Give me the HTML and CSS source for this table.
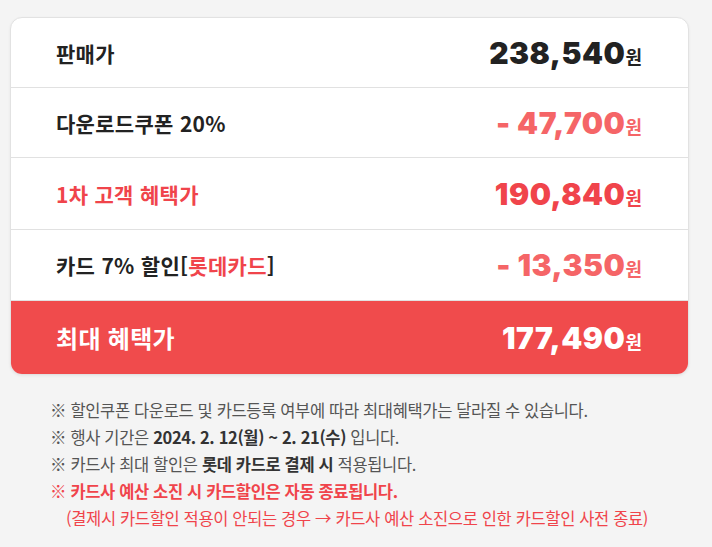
FILE: index.html
```html
<!DOCTYPE html>
<html lang="ko">
<head>
<meta charset="utf-8">
<title>최대 혜택가</title>
<link rel="stylesheet" href="styles.css">
</head>
<body>
<div class="page">
  <div class="card">
    <div class="row r1">
      <span class="label">판매가</span>
      <span class="price"><span class="num">238,540</span><span class="won">원</span></span>
    </div>
    <div class="row r2">
      <span class="label">다운로드쿠폰 20%</span>
      <span class="price minus"><span class="num">- 47,700</span><span class="won">원</span></span>
    </div>
    <div class="row r3">
      <span class="label red">1차 고객 혜택가</span>
      <span class="price strong-red"><span class="num">190,840</span><span class="won">원</span></span>
    </div>
    <div class="row r4">
      <span class="label">카드 7% 할인[<span class="red">롯데카드</span>]</span>
      <span class="price minus"><span class="num">- 13,350</span><span class="won">원</span></span>
    </div>
    <div class="row total">
      <span class="label">최대 혜택가</span>
      <span class="price"><span class="num">177,490</span><span class="won">원</span></span>
    </div>
  </div>
  <ul class="notes">
    <li>※ 할인쿠폰 다운로드 및 카드등록 여부에 따라 최대혜택가는 달라질 수 있습니다.</li>
    <li>※ 행사 기간은 <b>2024. 2. 12(월) ~ 2. 21(수)</b> 입니다.</li>
    <li>※ 카드사 최대 할인은 <b>롯데 카드로 결제 시</b> 적용됩니다.</li>
    <li class="warn">※ 카드사 예산 소진 시 카드할인은 자동 종료됩니다.</li>
    <li class="warn-sub">(결제시 카드할인 적용이 안되는 경우 → 카드사 예산 소진으로 인한 카드할인 사전 종료)</li>
  </ul>
</div>
</body>
</html>
```

FILE: styles.css
```css
* { box-sizing: border-box; }
html, body { margin: 0; padding: 0; }
body {
  background: #f4f4f4;
  font-family: "Noto Sans CJK KR", "Noto Sans", sans-serif;
  color: #222;
}
.page {
  padding: 17px 0 0 10px;
}
.card {
  width: 679px;
  background: #fff;
  border: 1px solid #e2e2e2;
  border-radius: 12px;
  box-shadow: 0 1px 3px rgba(0,0,0,0.06);
  overflow: hidden;
}
.row {
  display: flex;
  align-items: center;
  justify-content: space-between;
  padding: 0 46px 0 45px;
  border-bottom: 1px solid #e1e1e1;
}
.r1 { height: 70px; }
.r2 { height: 70px; }
.r3 { height: 72px; }
.r4 { height: 71px; }
.total {
  height: 73px;
  border-bottom: none;
  background: #f04b4c;
  color: #fff;
}
.label {
  font-size: 21px;
  font-weight: 700;
  letter-spacing: 0.3px;
  color: #222;
}
.label .red, .label.red { color: #f0444b; }
.total .label { color: #fff; font-weight: 700; font-size: 24px; }
.price {
  display: flex;
  align-items: baseline;
  color: #222;
}
.num {
  font-family: Inter, "Noto Sans", sans-serif;
  font-size: 30px;
  font-weight: 900;
  letter-spacing: 0.5px;
}
.won {
  font-size: 18px;
  font-weight: 700;
  margin-left: 0;
}
.minus { color: #f56567; }
.strong-red { color: #f0444b; }
.total .price { color: #fff; }
.notes {
  list-style: none;
  margin: 0;
  padding: 22px 0 0 40px;
  font-size: 16.5px;
  line-height: 27px;
  color: #555;
  letter-spacing: -0.35px;
}
.notes b { color: #333; font-weight: 700; }
.notes .warn { color: #f0444b; font-weight: 700; }
.notes .warn-sub { color: #f0444b; padding-left: 16px; }
```
